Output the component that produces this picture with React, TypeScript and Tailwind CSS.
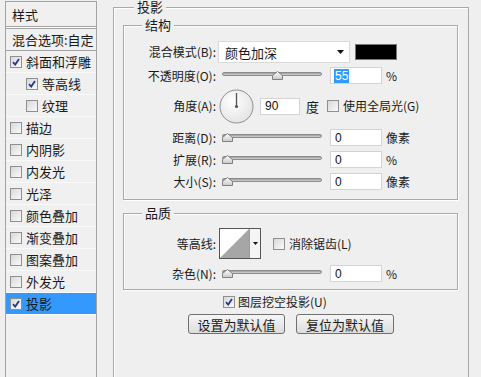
import React from 'react';

const effects = [
  { label: '斜面和浮雕', on: true },
  { label: '等高线', on: true, indent: true },
  { label: '纹理', indent: true },
  { label: '描边' },
  { label: '内阴影' },
  { label: '内发光' },
  { label: '光泽' },
  { label: '颜色叠加' },
  { label: '渐变叠加' },
  { label: '图案叠加' },
  { label: '外发光' },
  { label: '投影', on: true, active: true },
];

const Check = ({ on }: { on?: boolean }) => (
  <span className="flex h-[12px] w-[12px] shrink-0 items-center justify-center border border-[#8e8f8f] bg-linear-to-br from-[#d8d8d8] to-[#fafafa]">
    {on && (
      <svg width="8" height="8" viewBox="0 0 8 8">
        <path d="M1 4.2 L3.2 6.6 L7 1" fill="none" stroke="#243a8c" strokeWidth="1.8" />
      </svg>
    )}
  </span>
);

const Slider = ({ pos }: { pos: number }) => (
  <div className="relative ml-[6px] h-[17px] w-[100px]">
    <div className="mt-[5px] h-[4px] w-full rounded-full border border-[#8c8c8c] bg-linear-to-b from-[#9a9a9a] to-[#d6d6d6]" />
    <svg className="absolute top-[4px]" style={{ left: pos }} width="11" height="9" viewBox="0 0 11 9">
      <defs>
        <linearGradient id="th" x1="0" y1="0" x2="0" y2="1">
          <stop offset="0" stopColor="#ffffff" />
          <stop offset="1" stopColor="#c9c9c9" />
        </linearGradient>
      </defs>
      <path d="M5.5 0.5 L10.5 4.5 L10.5 8.5 L0.5 8.5 L0.5 4.5 Z" fill="url(#th)" stroke="#7f7f7f" />
    </svg>
  </div>
);

const Field = ({ value, w = 'w-[52px]', selected }: { value: string; w?: string; selected?: boolean }) => (
  <div className={`flex h-[17px] items-center border border-[#d4d4d4] bg-white pl-[3px] font-['Liberation_Sans',sans-serif] text-[12px] text-[#111] ${w}`}>
    {selected ? <span className="bg-[#3399ff] px-[1px] leading-[14px] text-white">{value}</span> : <span className="pl-[1px]">{value}</span>}
  </div>
);

const Label = ({ children }: { children: React.ReactNode }) => (
  <span className="w-[92px] shrink-0 text-right">{children}</span>
);

const SliderRow = ({ label, value, unit, pos, mt }: { label: string; value: string; unit: string; pos: number; mt: string }) => (
  <div className={`flex h-[17px] items-center ${mt}`}>
    <Label>{label}</Label>
    <Slider pos={pos} />
    <div className="ml-[8px]">
      <Field value={value} />
    </div>
    <span className="ml-[4px]">{unit}</span>
  </div>
);

export default function App() {
  return (
    <div className="flex h-[377px] w-[481px] overflow-hidden bg-[#efefef] font-['Noto_Sans_CJK_SC',sans-serif] text-[12px] leading-none text-[#1a1a1a]">
      {/* left list */}
      <div className="ml-[5px] mt-[1px] h-[420px] w-[92px] shrink-0 border border-[#a3a3a3] bg-[#f0f0f0]">
        <div className="flex h-[24px] items-center pl-[6px] text-[13px]">样式</div>
        <div className="h-[3px] border-y border-[#a3a3a3] bg-white" />
        <div className="flex h-[22px] items-center border-b border-[#a3a3a3] pl-[6px] text-[13px]">混合选项:自定</div>
        {effects.map((e) => (
          <div
            key={e.label}
            className={`flex h-[22px] items-center gap-[4px] border-b border-[#fafafa] text-[13px] ${e.indent ? 'pl-[20px]' : 'pl-[4px]'} ${e.active ? 'bg-[#3399ff]' : ''}`}
          >
            <Check on={e.on} />
            <span>{e.label}</span>
          </div>
        ))}
      </div>

      {/* right panel */}
      <div className="relative ml-[16px] mt-[7px] h-[400px] w-[356px] shrink-0 border border-[#a9a9a9] shadow-[inset_1px_1px_0_#ffffff]">
        <span className="absolute left-[20px] top-[-8px] bg-[#efefef] px-[3px] text-[13px] leading-[14px]">投影</span>

        {/* 结构 */}
        <div className="relative ml-[9px] mt-[17px] h-[175px] w-[335px] border border-[#a9a9a9] shadow-[inset_1px_1px_0_#ffffff,1px_1px_0_#ffffff]">
          <span className="absolute left-[18px] top-[-8px] bg-[#efefef] px-[3px] text-[13px] leading-[14px]">结构</span>

          <div className="mt-[15px] flex h-[22px] items-center">
            <Label>混合模式(B):</Label>
            <div className="ml-[2px] flex h-[22px] w-[132px] items-center justify-between border border-[#dadada] bg-white pl-[6px] pr-[5px] text-[13px]">
              <span>颜色加深</span>
              <svg width="7" height="4" viewBox="0 0 7 4">
                <path d="M0 0 H7 L3.5 4 Z" fill="#111" />
              </svg>
            </div>
            <div className="ml-[5px] h-[16px] w-[42px] border border-[#777] bg-black" />
          </div>

          <div className="mt-[4px] flex h-[17px] items-center">
            <Label>不透明度(O):</Label>
            <Slider pos={50} />
            <div className="ml-[8px]">
              <Field value="55" selected />
            </div>
            <span className="ml-[4px]">%</span>
          </div>

          <div className="mt-[5px] flex h-[34px] items-center">
            <Label>角度(A):</Label>
            <svg className="ml-[3px]" width="35" height="35" viewBox="0 0 35 35">
              <defs>
                <radialGradient id="dial" cx="0.4" cy="0.35" r="0.7">
                  <stop offset="0" stopColor="#ffffff" />
                  <stop offset="1" stopColor="#e2e2e2" />
                </radialGradient>
              </defs>
              <circle cx="17.5" cy="17.5" r="16.5" fill="url(#dial)" stroke="#8e8e8e" />
              <line x1="17.5" y1="17.5" x2="17.5" y2="4" stroke="#555" strokeWidth="1.3" />
              <circle cx="17.5" cy="17.5" r="1.6" fill="#555" />
            </svg>
            <div className="ml-[6px]">
              <Field value="90" w="w-[40px]" />
            </div>
            <span className="ml-[6px] text-[13px]">度</span>
            <div className="ml-[8px] flex items-center gap-[4px]">
              <Check />
              <span>使用全局光(G)</span>
            </div>
          </div>

          <SliderRow label="距离(D):" value="0" unit="像素" pos={0} mt="mt-[6px]" />
          <SliderRow label="扩展(R):" value="0" unit="%" pos={0} mt="mt-[5px]" />
          <SliderRow label="大小(S):" value="0" unit="像素" pos={0} mt="mt-[5px]" />
        </div>

        {/* 品质 */}
        <div className="relative ml-[9px] mt-[13px] h-[77px] w-[335px] border border-[#a9a9a9] shadow-[inset_1px_1px_0_#ffffff,1px_1px_0_#ffffff]">
          <span className="absolute left-[18px] top-[-8px] bg-[#efefef] px-[3px] text-[13px] leading-[14px]">品质</span>

          <div className="mt-[14px] flex h-[31px] items-center">
            <Label>等高线:</Label>
            <div className="ml-[3px] flex h-[31px] w-[42px] border border-[#555] bg-white">
              <svg width="29" height="29" viewBox="0 0 29 29">
                <polygon points="0,29 29,0 29,29" fill="#a6a6a6" />
              </svg>
              <div className="flex flex-1 items-center justify-center border-l border-[#9a9a9a] bg-[#f4f4f4]">
                <svg width="5" height="3" viewBox="0 0 5 3">
                  <path d="M0 0 H5 L2.5 3 Z" fill="#111" />
                </svg>
              </div>
            </div>
            <div className="ml-[12px] flex items-center gap-[4px]">
              <Check />
              <span>消除锯齿(L)</span>
            </div>
          </div>

          <SliderRow label="杂色(N):" value="0" unit="%" pos={0} mt="mt-[6px]" />
        </div>

        <div className="ml-[109px] mt-[5px] flex h-[13px] items-center gap-[3px]">
          <Check on />
          <span>图层挖空投影(U)</span>
        </div>

        <div className="mt-[6px] flex justify-center gap-[11px]">
          <button className="flex h-[20px] w-[97px] items-center justify-center rounded-[3px] border border-[#707070] bg-linear-to-b from-[#f6f6f6] to-[#dddddd] text-[13px]">
            设置为默认值
          </button>
          <button className="flex h-[20px] w-[98px] items-center justify-center rounded-[3px] border border-[#707070] bg-linear-to-b from-[#f6f6f6] to-[#dddddd] text-[13px]">
            复位为默认值
          </button>
        </div>
      </div>
    </div>
  );
}
